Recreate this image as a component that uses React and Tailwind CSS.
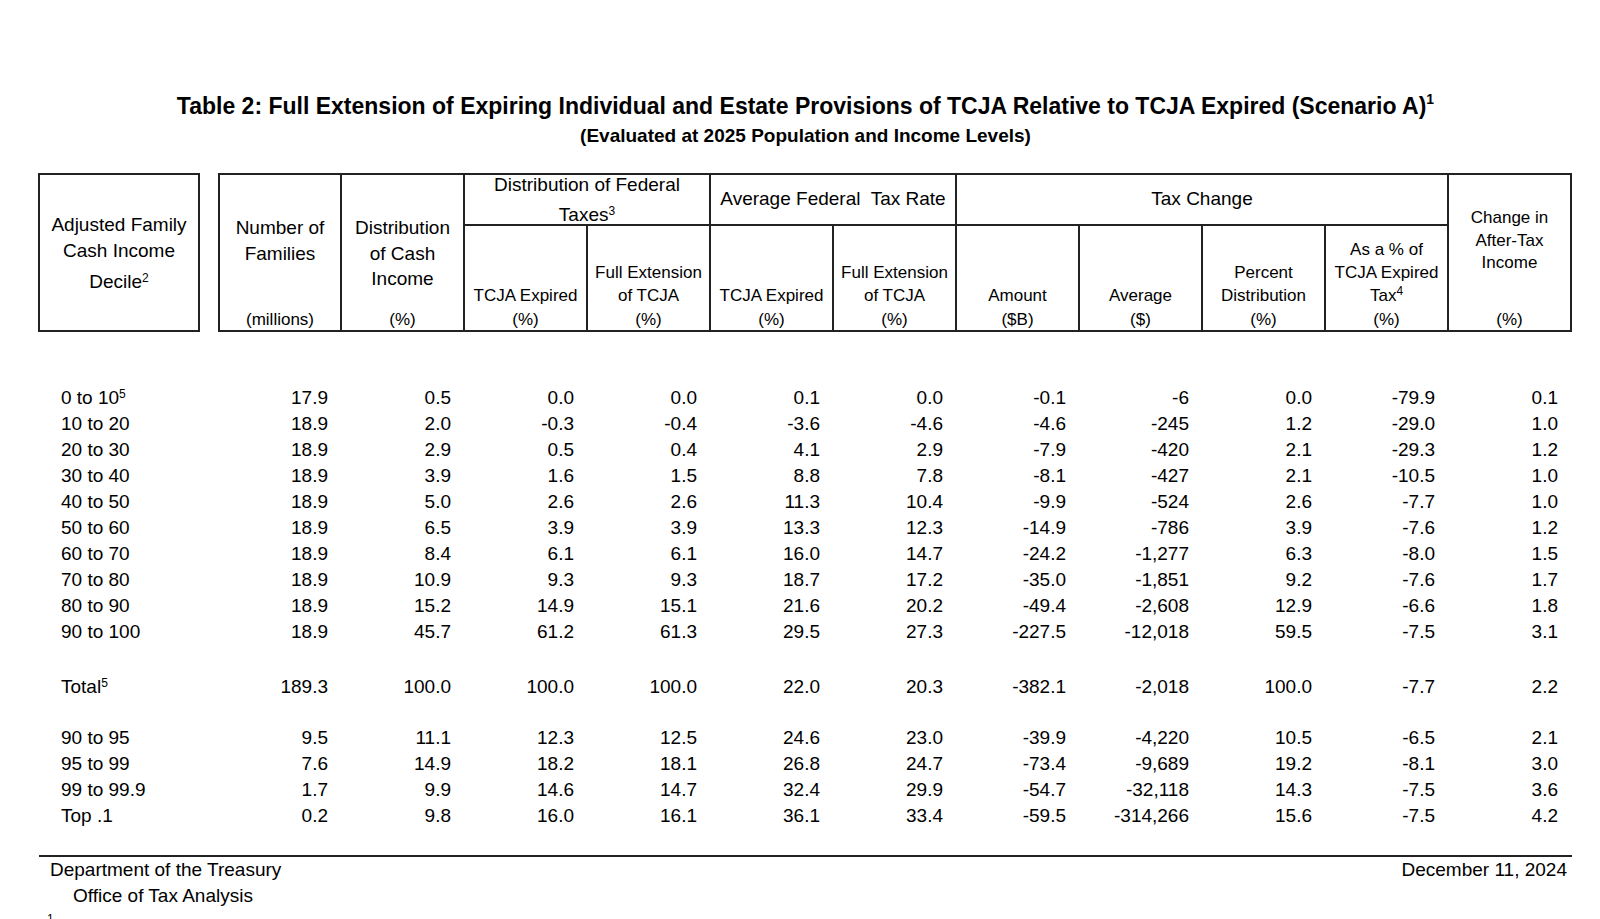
const deciles = [
  ["0 to 10", "5", "17.9", "0.5", "0.0", "0.0", "0.1", "0.0", "-0.1", "-6", "0.0", "-79.9", "0.1"],
  ["10 to 20", "", "18.9", "2.0", "-0.3", "-0.4", "-3.6", "-4.6", "-4.6", "-245", "1.2", "-29.0", "1.0"],
  ["20 to 30", "", "18.9", "2.9", "0.5", "0.4", "4.1", "2.9", "-7.9", "-420", "2.1", "-29.3", "1.2"],
  ["30 to 40", "", "18.9", "3.9", "1.6", "1.5", "8.8", "7.8", "-8.1", "-427", "2.1", "-10.5", "1.0"],
  ["40 to 50", "", "18.9", "5.0", "2.6", "2.6", "11.3", "10.4", "-9.9", "-524", "2.6", "-7.7", "1.0"],
  ["50 to 60", "", "18.9", "6.5", "3.9", "3.9", "13.3", "12.3", "-14.9", "-786", "3.9", "-7.6", "1.2"],
  ["60 to 70", "", "18.9", "8.4", "6.1", "6.1", "16.0", "14.7", "-24.2", "-1,277", "6.3", "-8.0", "1.5"],
  ["70 to 80", "", "18.9", "10.9", "9.3", "9.3", "18.7", "17.2", "-35.0", "-1,851", "9.2", "-7.6", "1.7"],
  ["80 to 90", "", "18.9", "15.2", "14.9", "15.1", "21.6", "20.2", "-49.4", "-2,608", "12.9", "-6.6", "1.8"],
  ["90 to 100", "", "18.9", "45.7", "61.2", "61.3", "29.5", "27.3", "-227.5", "-12,018", "59.5", "-7.5", "3.1"],
]

const total = ["Total", "5", "189.3", "100.0", "100.0", "100.0", "22.0", "20.3", "-382.1", "-2,018", "100.0", "-7.7", "2.2"]

const topGroups = [
  ["90 to 95", "", "9.5", "11.1", "12.3", "12.5", "24.6", "23.0", "-39.9", "-4,220", "10.5", "-6.5", "2.1"],
  ["95 to 99", "", "7.6", "14.9", "18.2", "18.1", "26.8", "24.7", "-73.4", "-9,689", "19.2", "-8.1", "3.0"],
  ["99 to 99.9", "", "1.7", "9.9", "14.6", "14.7", "32.4", "29.9", "-54.7", "-32,118", "14.3", "-7.5", "3.6"],
  ["Top .1", "", "0.2", "9.8", "16.0", "16.1", "36.1", "33.4", "-59.5", "-314,266", "15.6", "-7.5", "4.2"],
]

const Row = ({ row }) => {
  const [label, note, ...values] = row
  return (
    <div className="grid grid-cols-[180px_repeat(11,123px)] leading-[26px] h-[26px]">
      <div className="pl-[23px]">
        {label}
        {note && <sup className="text-[12px]">{note}</sup>}
      </div>
      {values.map((v, i) => (
        <div key={i} className="text-right pr-[13px]">{v}</div>
      ))}
    </div>
  )
}

// bottom-aligned sub header cell (second header row)
const SubHead = ({ lines, unit }) => (
  <div className="border-l-2 border-[#222] flex flex-col justify-end items-center text-[17px] text-center">
    {lines.map((l, i) => (
      <div key={i} className="leading-[23px]">{l}</div>
    ))}
    <div className="leading-[20px] mt-[3px]">{unit}</div>
  </div>
)

const App = () => {
  return (
    <div className="h-[919px] w-[1600px] overflow-hidden bg-white text-black font-['Liberation_Sans',Arial,sans-serif] text-[19px]">
      <div className="ml-[39px] w-[1533px] pt-[93px] text-center font-bold">
        <div className="text-[23px] leading-[27px]">
          Table 2: Full Extension of Expiring Individual and Estate Provisions of TCJA Relative to TCJA Expired (Scenario A)
          <sup className="text-[14px] -top-[10px]">1</sup>
        </div>
        <div className="text-[19px] leading-[22px] mt-[5px]">(Evaluated at 2025 Population and Income Levels)</div>
      </div>

      {/* header */}
      <div className="flex mt-[26px] ml-[38px]">
        <div className="w-[162px] h-[159px] border-2 border-[#222] text-center pt-[37px] leading-[25.5px]">
          <div>Adjusted Family</div>
          <div>Cash Income</div>
          <div className="mt-[6px]">Decile<sup className="text-[12px]">2</sup></div>
        </div>

        <div className="ml-[18px] border-2 border-[#222] grid grid-cols-[120px_repeat(10,123px)] grid-rows-[51px_104px]">
          <div className="row-span-2 flex flex-col items-center text-center">
            <div className="pt-[40px] leading-[25.5px]">
              <div>Number of</div>
              <div>Families</div>
            </div>
            <div className="mt-auto text-[17px] leading-[20px]">(millions)</div>
          </div>
          <div className="row-span-2 border-l-2 border-[#222] flex flex-col items-center text-center">
            <div className="pt-[40px] leading-[25.5px]">
              <div>Distribution</div>
              <div>of Cash</div>
              <div>Income</div>
            </div>
            <div className="mt-auto text-[17px] leading-[20px]">(%)</div>
          </div>
          <div className="col-span-2 border-l-2 border-b-2 border-[#222] text-center">
            <div className="leading-[20px]">Distribution of Federal</div>
            <div className="leading-[20px] mt-[10px]">Taxes<sup className="text-[12px]">3</sup></div>
          </div>
          <div className="col-span-2 border-l-2 border-b-2 border-[#222] flex items-center justify-center whitespace-pre">
            Average Federal  Tax Rate
          </div>
          <div className="col-span-4 border-l-2 border-b-2 border-[#222] flex items-center justify-center">
            Tax Change
          </div>
          <div className="row-span-2 border-l-2 border-[#222] flex flex-col items-center text-center">
            <div className="pt-[32px] text-[17px] leading-[22.5px]">
              <div>Change in</div>
              <div>After-Tax</div>
              <div>Income</div>
            </div>
            <div className="mt-auto text-[17px] leading-[20px]">(%)</div>
          </div>

          <div className="row-start-2 col-start-3 grid">
            <SubHead lines={["TCJA Expired"]} unit="(%)" />
          </div>
          <SubHead lines={["Full Extension", "of TCJA"]} unit="(%)" />
          <SubHead lines={["TCJA Expired"]} unit="(%)" />
          <SubHead lines={["Full Extension", "of TCJA"]} unit="(%)" />
          <SubHead lines={["Amount"]} unit="($B)" />
          <SubHead lines={["Average"]} unit="($)" />
          <SubHead lines={["Percent", "Distribution"]} unit="(%)" />
          <SubHead
            lines={["As a % of", "TCJA Expired", <span key="t">Tax<sup className="text-[12px]">4</sup></span>]}
            unit="(%)"
          />
        </div>
      </div>

      {/* body */}
      <div className="mt-[53px] ml-[38px]">
        {deciles.map((r) => (
          <Row key={r[0]} row={r} />
        ))}
        <div className="mt-[29px]">
          <Row row={total} />
        </div>
        <div className="mt-[25px]">
          {topGroups.map((r) => (
            <Row key={r[0]} row={r} />
          ))}
        </div>
      </div>

      {/* footer */}
      <div className="ml-[39px] w-[1533px] mt-[26px] border-t-2 border-[#222]">
        <div className="flex justify-between leading-[26px]">
          <div className="pl-[11px]">Department of the Treasury</div>
          <div className="pr-[5px]">December 11, 2024</div>
        </div>
        <div className="pl-[34px] leading-[26px]">Office of Tax Analysis</div>
        <div className="pl-[8px] mt-[4px] text-[12px] leading-[12px]">1</div>
      </div>
    </div>
  )
}

export default App
